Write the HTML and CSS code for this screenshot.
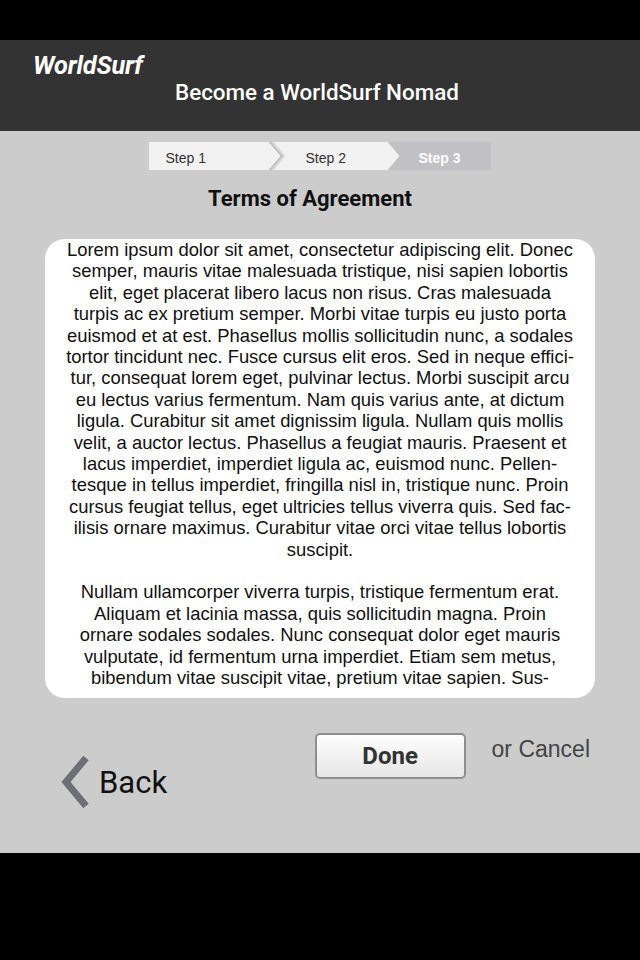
FILE: index.html
```html
<!DOCTYPE html>
<html>
<head>
<meta charset="utf-8">
<link rel="stylesheet" href="styles.css">
</head>
<body>
<div class="topbar"></div>
<header class="header">
  <div class="logo">WorldSurf</div>
  <h1 class="headline">Become a WorldSurf Nomad</h1>
</header>
<main class="main">
  <div class="steps">
    <div class="step step-1">Step 1</div>
    <div class="step step-2">Step 2</div>
    <div class="step step-3">Step 3</div>
  </div>
  <h2 class="title">Terms of Agreement</h2>
  <div class="card">
    <div class="terms">
      <p>Lorem ipsum dolor sit amet, consectetur adipiscing elit. Donec<br>semper, mauris vitae malesuada tristique, nisi sapien lobortis<br>elit, eget placerat libero lacus non risus. Cras malesuada<br>turpis ac ex pretium semper. Morbi vitae turpis eu justo porta<br>euismod et at est. Phasellus mollis sollicitudin nunc, a sodales<br>tortor tincidunt nec. Fusce cursus elit eros. Sed in neque effici-<br>tur, consequat lorem eget, pulvinar lectus. Morbi suscipit arcu<br>eu lectus varius fermentum. Nam quis varius ante, at dictum<br>ligula. Curabitur sit amet dignissim ligula. Nullam quis mollis<br>velit, a auctor lectus. Phasellus a feugiat mauris. Praesent et<br>lacus imperdiet, imperdiet ligula ac, euismod nunc. Pellen-<br>tesque in tellus imperdiet, fringilla nisl in, tristique nunc. Proin<br>cursus feugiat tellus, eget ultricies tellus viverra quis. Sed fac-<br>ilisis ornare maximus. Curabitur vitae orci vitae tellus lobortis<br>suscipit.</p>
      <p>Nullam ullamcorper viverra turpis, tristique fermentum erat.<br>Aliquam et lacinia massa, quis sollicitudin magna. Proin<br>ornare sodales sodales. Nunc consequat dolor eget mauris<br>vulputate, id fermentum urna imperdiet. Etiam sem metus,<br>bibendum vitae suscipit vitae, pretium vitae sapien. Sus-</p>
    </div>
  </div>
  <div class="actions">
    <a class="back" href="#">
      <svg class="chevron" width="32" height="54" viewBox="0 0 32 54"><path d="M27 3 L7 27 L27 51" fill="none" stroke="#6e6e78" stroke-width="7" stroke-linecap="butt" stroke-linejoin="miter"/></svg>
      <span>Back</span>
    </a>
    <div class="confirm">
      <button class="done">Done</button>
      <span class="cancel">or Cancel</span>
    </div>
  </div>
</main>
<div class="bottombar"></div>
</body>
</html>
```

FILE: styles.css
```css
html, body {
  margin: 0;
  padding: 0;
  background: #000;
}
body {
  width: 640px;
  height: 960px;
  font-family: Roboto, "Liberation Sans", sans-serif;
}
.topbar {
  height: 40px;
  background: #000;
}
.header {
  height: 91px;
  background: #333333;
  box-sizing: border-box;
  padding: 10px 0 0 33px;
  color: #fff;
}
.logo {
  font-style: italic;
  font-weight: 700;
  font-size: 25.4px;
  line-height: 30px;
  letter-spacing: -0.2px;
}
.headline {
  margin: -1px 0 0 142px;
  font-size: 22.4px;
  font-weight: 500;
  line-height: 26px;
}
.main {
  height: 722px;
  background: #cccccc;
  box-sizing: border-box;
  padding-top: 11px;
  display: flex;
  flex-direction: column;
  align-items: center;
}
.steps {
  width: 342px;
  height: 28px;
  margin-left: -1px;
  background: #c1c1c5;
  display: flex;
  font-family: "Liberation Sans", Arial, sans-serif;
  font-size: 14px;
}
.step {
  height: 28px;
  line-height: 32px;
  box-sizing: border-box;
}
.step-1 {
  width: 132px;
  padding-left: 17px;
  background: #f1f1f1;
  color: #333;
  clip-path: polygon(0 0, 120px 0, 132px 14px, 120px 28px, 0 28px);
  position: relative;
  z-index: 2;
}
.step-2 {
  width: 128px;
  margin-left: -9px;
  padding-left: 34px;
  background: #f1f1f1;
  color: #333;
  clip-path: polygon(0 0, 116px 0, 128px 14px, 116px 28px, 0 28px, 12px 14px);
  position: relative;
}
.step-2::before {
  content: "";
  position: absolute;
  left: 0;
  top: 0;
  width: 13px;
  height: 28px;
  background: #d6d6d6;
  clip-path: polygon(0 0, 2px 0, 14px 14px, 2px 28px, 0 28px, 12px 14px);
}
.step-3 {
  flex: 1;
  padding-left: 19px;
  color: #fff;
  font-weight: 700;
}
.title {
  margin: 16px 20px 0 0;
  font-size: 22px;
  font-weight: 700;
  color: #111;
  line-height: 26px;
}
.card {
  margin-top: 27px;
  width: 550px;
  height: 459px;
  background: #fff;
  border-radius: 20px;
  overflow: hidden;
}
.terms {
  margin-top: 0;
  font-family: "Liberation Sans", Arial, sans-serif;
  font-size: 18.4px;
  line-height: 21.4px;
  color: #111;
  text-align: center;
}
.terms p {
  margin: 0 0 21.4px 0;
}
.actions {
  width: 640px;
  box-sizing: border-box;
  padding: 35px 50px 0 62px;
  display: flex;
  justify-content: space-between;
  align-items: flex-start;
}
.back {
  margin-top: 22px;
  display: flex;
  align-items: center;
  gap: 8px;
  text-decoration: none;
  color: #111;
  font-size: 31px;
}
.chevron {
  display: block;
  margin-left: -3px;
}
.confirm {
  display: flex;
  align-items: flex-start;
  gap: 26px;
}
.done {
  width: 151px;
  height: 46px;
  border: 2px solid #8e8e8e;
  border-radius: 5px;
  background: linear-gradient(#fdfdfd, #e6e6e6);
  font-family: Roboto, "Liberation Sans", sans-serif;
  font-weight: 700;
  font-size: 24px;
  color: #333;
  padding: 0;
}
.cancel {
  margin-top: 3px;
  font-family: "Liberation Sans", Arial, sans-serif;
  font-size: 23px;
  color: #444;
}
.bottombar {
  height: 107px;
  background: #000;
}
```
